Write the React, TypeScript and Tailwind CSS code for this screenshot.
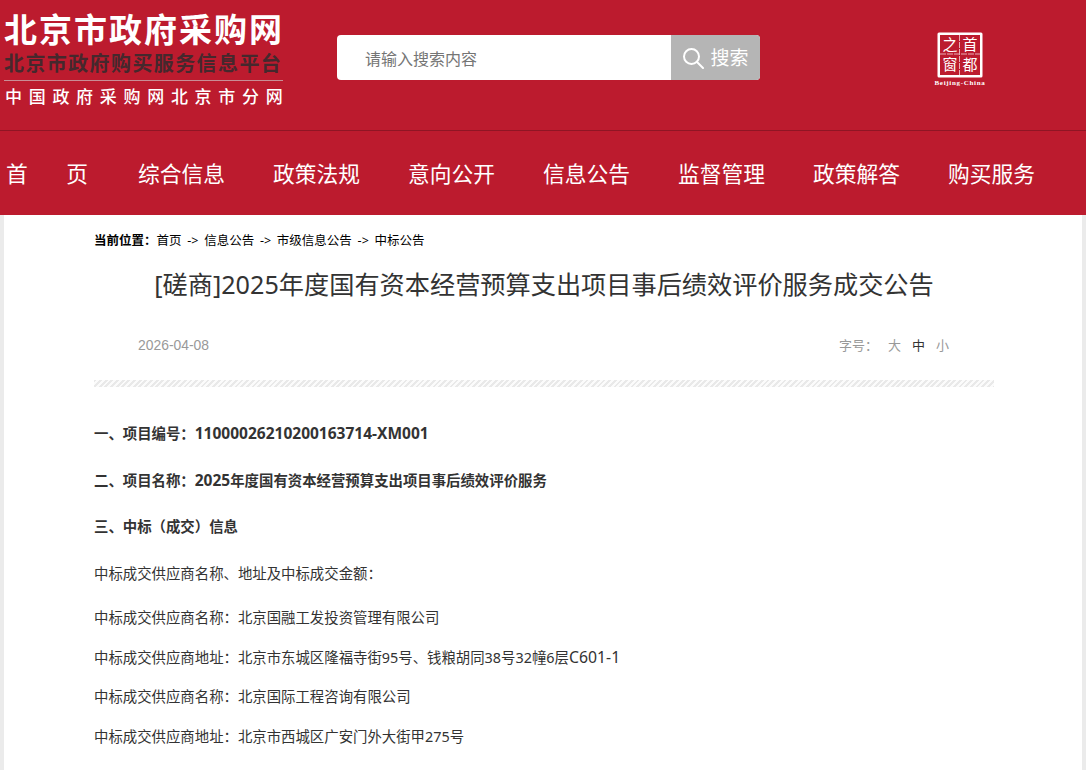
const font = "font-['Noto_Sans','Noto_Sans_CJK_SC',sans-serif]";

const navItems = ['综合信息', '政策法规', '意向公开', '信息公告', '监督管理', '政策解答', '购买服务'];

function CapitalLogo() {
  return (
    <div className="flex flex-col items-center w-[50px]">
      <svg width="46" height="46" viewBox="0 0 46 46">
        <rect x="0.5" y="0.5" width="45" height="45" rx="1.5" fill="#fff" />
        <rect x="3" y="3" width="40" height="40" fill="#bc1b2e" />
        <path d="M22.5 3V43M3 22H43" stroke="#fff" strokeWidth="1" strokeDasharray="6 1" opacity="0.65" />
        <text x="13" y="18" fontSize="15" fill="#fff" textAnchor="middle" fontFamily="'Noto Sans CJK SC'">之</text>
        <text x="33" y="18" fontSize="15" fill="#fff" textAnchor="middle" fontFamily="'Noto Sans CJK SC'">首</text>
        <text x="13" y="38" fontSize="15" fill="#fff" textAnchor="middle" fontFamily="'Noto Sans CJK SC'">窗</text>
        <text x="33" y="38" fontSize="15" fill="#fff" textAnchor="middle" fontFamily="'Noto Sans CJK SC'">都</text>
      </svg>
      <span className="text-[7px] leading-[8px] mt-[1px] text-white font-bold font-['Liberation_Serif',serif] whitespace-nowrap tracking-[0.7px]">Beijing-China</span>
    </div>
  );
}

function Header() {
  return (
    <header className="bg-[#bc1b2e]">
      <div className="h-[131px] flex items-start border-b border-[#8f1524]">
        <div className="w-[279px] ml-[4px] mt-[11px] flex flex-col">
          <div className="text-[33px] leading-[38px] font-bold text-white tracking-[2px] whitespace-nowrap">北京市政府采购网</div>
          <div className="text-[20px] leading-[24px] font-bold text-[#45282d] tracking-[1.4px] whitespace-nowrap mt-[3px]">北京市政府购买服务信息平台</div>
          <div className="h-[1px] bg-[#c98d95] mt-[4px]"></div>
          <div className="text-[17px] leading-[22px] font-medium text-white tracking-[6.7px] whitespace-nowrap mt-[5px] pl-[1px]">中国政府采购网北京市分网</div>
        </div>
        <div className="ml-[54px] mt-[35px] w-[423px] h-[45px] flex rounded-[4px] overflow-hidden bg-white">
          <div className="flex-1 pl-[28px] text-[16px] leading-[48px] text-[#757575]">请输入搜索内容</div>
          <div className="w-[89px] bg-[#b5b5b5] flex items-center justify-center gap-[6px] text-white text-[19px]">
            <svg width="22" height="22" viewBox="0 0 22 22" fill="none" stroke="#fff" strokeWidth="2">
              <circle cx="9.5" cy="9.5" r="7.5" />
              <path d="M15 15l6 6" strokeLinecap="round" />
            </svg>
            <span className="pt-[2px]">搜索</span>
          </div>
        </div>
        <div className="ml-[175px] mt-[32px]">
          <CapitalLogo />
        </div>
      </div>
      <nav className="h-[84px] flex items-center pl-[6px] pt-[2px] text-white text-[21.75px] whitespace-nowrap">
        <span className="w-[82px] flex justify-between mr-[50px]">
          <span>首</span>
          <span>页</span>
        </span>
        <div className="flex gap-[48px]">
          {navItems.map((item) => (
            <span key={item}>{item}</span>
          ))}
        </div>
      </nav>
    </header>
  );
}

function Hatch() {
  return (
    <div className="h-[7px] bg-[repeating-linear-gradient(135deg,#e9e9e9_0px,#e9e9e9_2px,#fbfbfb_2px,#fbfbfb_4px)]"></div>
  );
}

export default function App() {
  return (
    <div className={`${font} h-[770px] overflow-hidden bg-[#ebebeb]`}>
      <Header />
      <main className="mx-[4px] bg-white h-[555px] px-[90px]">
        <div className="w-[900px] pt-[17px]">
          <div className="text-[12.5px] leading-[18px] text-black whitespace-nowrap [word-spacing:2.5px]">
            <b>当前位置：</b>首页 -&gt; 信息公告 -&gt; 市级信息公告 -&gt; 中标公告
          </div>
          <h1 className="text-[25.2px] leading-[36px] text-[#333] text-center mt-[16px]">[磋商]2025年度国有资本经营预算支出项目事后绩效评价服务成交公告</h1>
          <div className="flex justify-between leading-[20px] text-[#999] mt-[33px] pl-[44px] pr-[45px]">
            <span className="text-[13.9px] font-['Liberation_Sans',sans-serif]">2026-04-08</span>
            <span className="text-[13px] flex">
              <span className="mr-[10px]">字号：</span>
              <span className="mr-[11px]">大</span>
              <span className="mr-[11px] text-[#333]">中</span>
              <span>小</span>
            </span>
          </div>
          <div className="mt-[25px]">
            <Hatch />
          </div>
          <div className="text-[#333] mt-[35px] text-[14.4px] leading-[24px]">
            <p className="font-bold">一、项目编号：<span className="text-[15.5px] leading-none">11000026210200163714-XM001</span></p>
            <p className="font-bold mt-[23px]">二、项目名称：<span className="text-[15.5px] leading-none">2025</span>年度国有资本经营预算支出项目事后绩效评价服务</p>
            <p className="font-bold mt-[22px]">三、中标（成交）信息</p>
            <p className="mt-[23px]">中标成交供应商名称、地址及中标成交金额：</p>
            <div className="mt-[20px] flex flex-col gap-[15.5px]">
              <p>中标成交供应商名称：北京国融工发投资管理有限公司</p>
              <p>中标成交供应商地址：北京市东城区隆福寺街95号、钱粮胡同38号32幢6层<span className="text-[15.8px] leading-none">C601-1</span></p>
              <p>中标成交供应商名称：北京国际工程咨询有限公司</p>
              <p>中标成交供应商地址：北京市西城区广安门外大街甲275号</p>
            </div>
          </div>
        </div>
      </main>
    </div>
  );
}
